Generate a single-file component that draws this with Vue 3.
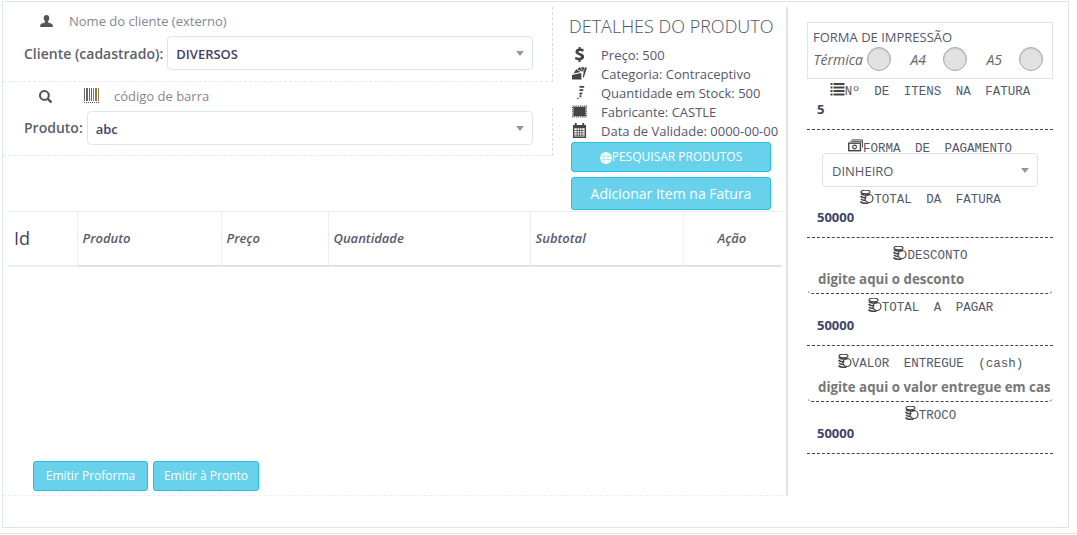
<script setup>
const columns = [
  { label: 'Produto', cls: 'col-produto' },
  { label: 'Preço', cls: 'col-preco' },
  { label: 'Quantidade', cls: 'col-qtd' },
  { label: 'Subtotal', cls: 'col-sub' },
  { label: 'Ação', cls: 'col-acao' }
]
const printModes = ['Térmica', 'A4', 'A5']
</script>

<template>
  <div class="screen">
    <div class="page">
      <div class="left">
        <div class="top">
          <div class="forms">
            <div class="client">
              <div class="hint-row client-hint">
                <svg class="ico" viewBox="0 0 14 14"><path d="M7 0c2 0 3 1.400 3 3.300 0 1.500-.6 2.900-1.500 3.600 0 .8.300 1.200 1.100 1.500 1.800.6 3.400 1.100 3.900 2.100.3.600.3 1.500.3 2.500H.2c0-1 0-1.900.3-2.500.5-1 2.100-1.500 3.900-2.100.8-.3 1.100-.7 1.100-1.500C4.600 6.200 4 4.800 4 3.300 4 1.400 5 0 7 0z" fill="#555"/></svg>
                <span class="hint">Nome do cliente (externo)</span>
              </div>
              <div class="field-row client-field">
                <label class="field-label">Cliente (cadastrado):</label>
                <div class="select"><span>DIVERSOS</span><i class="caret"></i></div>
              </div>
            </div>
            <div class="product">
              <div class="hint-row product-hint">
                <svg class="ico" viewBox="0 0 14 14"><path d="M5.800 0a5.800 5.800 0 1 0 3.100 10.700l3 3c.4.400 1 .4 1.400 0l.4-.4c.4-.4.400-1 0-1.400l-3-3A5.800 5.800 0 0 0 5.800 0zm0 2.200a3.600 3.600 0 1 1 0 7.200 3.600 3.600 0 0 1 0-7.200z" fill="#555"/></svg>
                <svg class="barcode" viewBox="0 0 16 16">
                  <path d="M1 0h1v13H1zM3 0h2v13H3zM6 0h1v13H6zM8 0h1v13H8z" fill="#666"/>
                  <path d="M10 0h1v13h-1zM12 0h2v13h-2zM15 0h1v13h-1z" fill="#8a7a4c"/>
                  <path d="M1 14.500h15" stroke="#555" stroke-dasharray="1 1"/>
                </svg>
                <span class="hint">código de barra</span>
              </div>
              <div class="field-row product-field">
                <label class="field-label">Produto:</label>
                <div class="select"><span>abc</span><i class="caret"></i></div>
              </div>
            </div>
          </div>

          <div class="details">
            <h3 class="details-title">DETALHES DO PRODUTO</h3>
            <ul class="details-list">
              <li>
                <svg class="ico-detail" viewBox="0 0 16 16"><path d="M7 0h2.200v1.700c1.500.1 2.700.5 3.500 1l-.8 2.400c-.9-.5-2-.9-3.200-.9-1.100 0-1.700.4-1.700 1 0 .7.800 1 2.300 1.500 2.500.8 3.600 1.900 3.600 3.700s-1.300 3.200-3.700 3.600V16H7v-2c-1.500-.1-3-.6-3.900-1.200l.8-2.400c1 .6 2.300 1.100 3.700 1.100 1.200 0 1.900-.5 1.900-1.200s-.7-1.100-2.200-1.600C5 7.900 3.700 6.900 3.700 5 3.700 3.300 5 2 7 1.700z" fill="#444"/></svg>
                <span>Preço: 500</span>
              </li>
              <li>
                <svg class="ico-detail" viewBox="0 0 16 16"><path d="M0 9.500l9.500-2 .5 1.500v5.500H0zM1.500 8l3-4.500 4.500 3zM5.500 3.500L8.500 1l2.500 5zM9.500 1.500L13 1l-1.200 6zM13.500 1.500H16l-3.500 11-1-1z" fill="#444"/></svg>
                <span>Categoria: Contraceptivo</span>
              </li>
              <li>
                <svg class="ico-detail" viewBox="0 0 16 16"><path d="M8 1h5v2H8zM8 4.500h4v2H8zM8 8h3v2H8zM8 11h2v2H8zM5.500 13.500H7V15H5.500z" fill="#444"/></svg>
                <span>Quantidade em Stock: 500</span>
              </li>
              <li>
                <svg class="ico-detail" viewBox="0 0 16 16"><rect x="1.500" y="3" width="13" height="10" fill="#444"/><rect x=".75" y="2.250" width="14.500" height="11.500" fill="none" stroke="#444" stroke-width="1.500" stroke-dasharray="1 1"/></svg>
                <span>Fabricante: CASTLE</span>
              </li>
              <li>
                <svg class="ico-detail" viewBox="0 0 16 16"><path d="M3 0h2v2h6V0h2v2h2v14H1V2h2zM2.500 5.500v9h11v-9z" fill="#444"/><path d="M2.500 8h11M2.500 10.500h11M2.500 13h11M5.500 5.500v9M8 5.500v9M10.500 5.500v9" stroke="#444" stroke-width=".8"/></svg>
                <span>Data de Validade: 0000-00-00</span>
              </li>
            </ul>
            <button class="btn btn-search">
              <svg class="globe" viewBox="0 0 12 12"><circle cx="6" cy="6" r="6" fill="#fff"/><path d="M0 4.500h12M0 7.500h12M4 0v12M8 0v12" stroke="#9ee0f1" stroke-width=".7"/></svg>PESQUISAR PRODUTOS
            </button>
            <button class="btn btn-add">Adicionar Item na Fatura</button>
          </div>
        </div>

        <table class="items">
          <thead>
            <tr>
              <th class="col-id">Id</th>
              <th v-for="c in columns" :key="c.label" :class="c.cls">{{ c.label }}</th>
            </tr>
          </thead>
        </table>

        <div class="actions">
          <button class="btn btn-small btn-proforma">Emitir Proforma</button>
          <button class="btn btn-small btn-pronto">Emitir à Pronto</button>
        </div>
      </div>

      <aside class="right">
        <div class="print-box">
          <div class="print-title">FORMA DE IMPRESSÃO</div>
          <div class="print-modes">
            <div class="print-mode" v-for="m in printModes" :key="m">
              <em>{{ m }}</em><span class="radio"></span>
            </div>
          </div>
        </div>

        <div class="title first-title"><svg class="ico-title" viewBox="0 0 14 14"><path d="M0 1h2v2H0zM3 1h11v2H3zM0 4.500h2v2H0zM3 4.500h11v2H3zM0 8h2v2H0zM3 8h11v2H3zM0 11.500h2v2H0zM3 11.500h11v2H3z" fill="#444"/></svg>Nº DE ITENS NA FATURA</div>
        <div class="value">5</div>
        <div class="sep"></div>

        <div class="title pay-title"><svg class="ico-title" viewBox="0 0 16 14"><path d="M4 .5h11.500v8M2.500 2h11.500v1.500" fill="none" stroke="#444"/><rect x=".8" y="4" width="12.500" height="8" fill="none" stroke="#444" stroke-width="1.500"/><circle cx="7" cy="8" r="2" fill="none" stroke="#444" stroke-width="1.200"/></svg>FORMA DE PAGAMENTO</div>
        <div class="select pay-select"><span>DINHEIRO</span><i class="caret"></i></div>

        <div class="title"><svg class="ico-title" viewBox="0 0 14 14"><use href="#coins"/></svg>TOTAL DA FATURA</div>
        <div class="value">50000</div>
        <div class="sep"></div>

        <div class="title"><svg class="ico-title" viewBox="0 0 14 14"><use href="#coins"/></svg>DESCONTO</div>
        <input class="money-input" placeholder="digite aqui o desconto" />

        <div class="title after-input"><svg class="ico-title" viewBox="0 0 14 14"><use href="#coins"/></svg>TOTAL A PAGAR</div>
        <div class="value">50000</div>
        <div class="sep"></div>

        <div class="title"><svg class="ico-title" viewBox="0 0 14 14"><use href="#coins"/></svg>VALOR ENTREGUE (cash)</div>
        <input class="money-input" placeholder="digite aqui o valor entregue em cash" />

        <div class="title after-input"><svg class="ico-title" viewBox="0 0 14 14"><use href="#coins"/></svg>TROCO</div>
        <div class="value">50000</div>
        <div class="sep"></div>
      </aside>
    </div>

    <svg width="0" height="0" class="defs">
      <defs>
        <g id="coins">
          <ellipse cx="6" cy="2" rx="4.500" ry="1.800" fill="none" stroke="#444" stroke-width="1.200"/>
          <path d="M1.500 3.500c1 1.500 6 2 8.500 1M1 6c1 1.500 4 1.800 6 1.500M1.500 9c1 1.200 3 1.500 4.500 1.500M1 11.500c1 1.500 5 2 8 1.500" fill="none" stroke="#444" stroke-width="1.500"/>
          <circle cx="9.500" cy="8.500" r="4" fill="none" stroke="#444" stroke-width="1.200"/>
        </g>
      </defs>
    </svg>
  </div>
</template>

<style>
html, body {
  margin: 0;
  background: #fff;
}
</style>

<style scoped>
.screen {
  width: 1077px;
  height: 532px;
  overflow: hidden;
  border-bottom: 1px solid #dfe2ea;
  padding-top: 1px;
  font-family: "Open Sans", "Noto Sans", sans-serif;
  font-size: 13px;
  color: #54586a;
}

.defs {
  position: absolute;
}

.page {
  box-sizing: border-box;
  display: flex;
  margin-left: 2px;
  width: 1067px;
  height: 527px;
  padding-top: 5px;
  border: 1px solid #dfe4ec;
}

.left {
  box-sizing: border-box;
  width: 785px;
  height: 489px;
  display: flex;
  flex-direction: column;
  border-right: 2px solid #dde4ee;
  border-bottom: 1px dashed #eceef2;
}

.top {
  display: flex;
  height: 204px;
}

.forms {
  width: 550px;
  flex: none;
}

.client {
  box-sizing: border-box;
  height: 75px;
  border-bottom: 1px dashed #e5e8ee;
  border-right: 1px dashed #d5dae4;
}

.hint-row {
  display: flex;
  align-items: center;
  height: 14px;
}

.client-hint {
  padding: 7px 0 0 37px;
}

.ico {
  width: 13px;
  height: 13px;
  flex: none;
}

.hint {
  color: #85878f;
  line-height: 14px;
}

.client-hint .hint {
  margin-left: 16px;
}

.field-row {
  display: flex;
  align-items: center;
  gap: 4px;
}

.client-field {
  margin-top: 8px;
  padding: 0 19px 0 21px;
}

.field-label {
  font-size: 14px;
  font-weight: 600;
  color: #5b5f6b;
  white-space: nowrap;
}

.select {
  box-sizing: border-box;
  flex: 1;
  height: 34px;
  border: 1px solid #dfe3ec;
  border-radius: 4px;
  display: flex;
  align-items: center;
  justify-content: space-between;
  padding: 1px 8px 0 8px;
  font-size: 13px;
  font-weight: 600;
  color: #3d4466;
  background: #fff;
}

.caret {
  width: 0;
  height: 0;
  border-left: 4px solid transparent;
  border-right: 4px solid transparent;
  border-top: 5px solid #999;
}

.product-hint {
  padding: 7px 0 0 36px;
}

.barcode {
  width: 16px;
  height: 16px;
  margin-left: 31px;
  flex: none;
}

.product-hint .hint {
  margin-left: 15px;
}

.product-field {
  box-sizing: border-box;
  height: 48px;
  margin-top: 5px;
  padding: 3px 19px 11px 21px;
  border-bottom: 1px dashed #e5e8ee;
  border-right: 1px dashed #d5dae4;
}

.product-field .select {
  padding-top: 2px;
}

.details {
  flex: 1;
  padding-left: 18px;
}

.details-title {
  margin: 0 0 0 -2px;
  padding-top: 8px;
  font-size: 18px;
  font-weight: 300;
  line-height: 22px;
  color: #4f5467;
  white-space: nowrap;
}

.details-list {
  list-style: none;
  margin: 8px 0 0;
  padding: 0;
}

.details-list li {
  display: flex;
  align-items: center;
  height: 19px;
  white-space: nowrap;
}

.ico-detail {
  width: 15px;
  height: 15px;
  margin-right: 14px;
  margin-left: 1px;
  flex: none;
}

.btn {
  box-sizing: border-box;
  display: block;
  border: 1px solid #2cbde0;
  border-radius: 3px;
  background: #68d2ec;
  color: #fff;
  font-family: inherit;
  padding: 0;
  cursor: pointer;
}

.btn-search {
  width: 200px;
  height: 30px;
  margin-top: 2px;
  padding-bottom: 2px;
  font-size: 12px;
}

.globe {
  width: 12px;
  height: 12px;
  vertical-align: -3px;
}

.btn-add {
  width: 200px;
  height: 33px;
  margin-top: 5px;
  font-size: 14px;
}

.items {
  width: 774px;
  margin: 0 0 0 5px;
  border-collapse: collapse;
  table-layout: fixed;
}

.items th {
  box-sizing: border-box;
  height: 54px;
  padding: 0 0 0 5px;
  border: 1px solid #eceef3;
  border-bottom: 2px solid #dde1ea;
  text-align: left;
  font-size: 13px;
  font-style: italic;
  font-weight: 600;
  color: #5a5a6c;
}

.items th:first-child {
  border-left: 0;
  border-bottom-color: #eceef3;
}

.items th:last-child {
  border-right: 0;
}

.items .col-id {
  width: 69px;
  padding-left: 6px;
  font-size: 18px;
  font-style: normal;
  font-weight: 400;
  color: #3f4456;
}

.col-produto {
  width: 144px;
}

.col-preco {
  width: 107px;
}

.col-qtd {
  width: 202px;
}

.col-sub {
  width: 153px;
}

.items .col-acao {
  padding-left: 34px;
}

.actions {
  display: flex;
  gap: 5px;
  margin-top: auto;
  padding: 0 0 4px 30px;
}

.btn-small {
  height: 30px;
  padding-bottom: 1px;
  font-size: 12px;
}

.btn-proforma {
  width: 115px;
}

.btn-pronto {
  width: 106px;
}

.right {
  box-sizing: border-box;
  width: 246px;
  margin-left: 19px;
  padding-top: 15px;
}

.print-box {
  box-sizing: border-box;
  height: 57px;
  border: 1px solid #dfe4ec;
  padding: 6px 5px 0;
}

.print-title {
  line-height: 16px;
  color: #54586a;
}

.print-modes {
  display: flex;
  margin-top: 2px;
}

.print-mode {
  display: flex;
  align-items: center;
  justify-content: flex-end;
  gap: 4px;
  width: 76px;
  height: 24px;
}

.print-mode:first-child {
  width: 78px;
}

.print-mode em {
  font-size: 14px;
  color: #666;
}

.print-mode + .print-mode em {
  margin-right: 13px;
}

.radio {
  box-sizing: border-box;
  width: 24px;
  height: 24px;
  border-radius: 50%;
  border: 1px solid #a9a9a9;
  background: #e2e2e2;
  box-shadow: inset 0 1px 2px rgba(0, 0, 0, 0.12);
}

.title {
  height: 16px;
  line-height: 16px;
  margin-top: 8px;
  text-align: center;
  white-space: nowrap;
  word-spacing: 7px;
  font-family: "Liberation Mono", monospace;
  font-size: 12.5px;
  color: #54586a;
}

.first-title {
  margin-top: 3px;
}

.pay-title {
  margin-top: 9px;
}

.after-input {
  margin-top: 4px;
}

.ico-title {
  width: 15px;
  height: 14px;
  vertical-align: -1px;
}

.value {
  height: 16px;
  line-height: 16px;
  margin-top: 3px;
  padding-left: 10px;
  font-size: 13px;
  font-weight: 700;
  color: #3d4466;
}

.sep {
  margin-top: 12px;
  border-bottom: 1px dashed #444;
}

.pay-select {
  width: 216px;
  margin: -2px 0 3px 15px;
  padding-left: 9px;
  font-weight: 400;
  color: #54586a;
}

.pay-select + .title {
  margin-top: 3px;
}

.money-input {
  box-sizing: border-box;
  display: block;
  width: 244px;
  height: 29px;
  margin: 3px 0 0 1px;
  padding: 0 2px 0 10px;
  border: 0;
  border-bottom: 1px dashed #444;
  border-radius: 4px;
  outline: none;
  font-family: inherit;
  font-size: 13.3px;
  font-weight: 700;
  background: #fff;
}

.money-input::placeholder {
  color: #777;
  opacity: 1;
}
</style>
